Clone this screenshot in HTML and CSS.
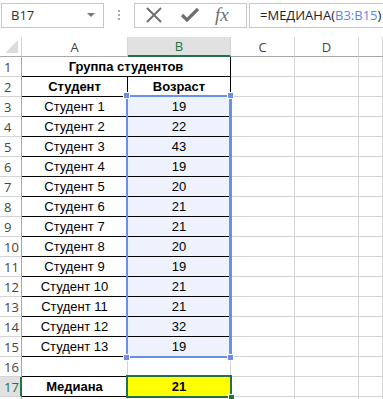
FILE: index.html
```html
<!DOCTYPE html>
<html>

<head>
    <title>Медиана</title>
    <link rel="stylesheet" href="styles.css">
</head>

<body>
    <div class="formula-bar">
        <div class="name-box">
            <span>B17</span>
            <span class="arrow"></span>
        </div>
        <div class="grip">
            <i></i><i></i><i></i>
        </div>
        <div class="buttons">
            <svg width="18" height="18" viewBox="0 0 18 18">
                <path d="M2 2 L16 16 M16 2 L2 16" stroke="#6f6f6f" stroke-width="2" fill="none" />
            </svg>
            <svg width="20" height="18" viewBox="0 0 20 18">
                <path d="M2 9 L7 14 L18 3" stroke="#6f6f6f" stroke-width="3.2" fill="none" />
            </svg>
            <span class="fx">fx</span>
        </div>
        <div class="formula">=МЕДИАНА(<span class="ref">B3:B15</span>)</div>
    </div>

    <div class="sheet">
        <!-- column headers -->
        <div class="corner"><span class="tri"></span></div>
        <div class="col-head">A</div>
        <div class="col-head active">B</div>
        <div class="col-head">C</div>
        <div class="col-head">D</div>
        <div class="col-head"></div>

        <!-- row 1 -->
        <div class="row-head">1</div>
        <div class="cell bold title">Группа студентов</div>
        <div class="cell"></div>
        <div class="cell"></div>
        <div class="cell"></div>

        <!-- row 2 -->
        <div class="row-head">2</div>
        <div class="cell bold boxed">Студент</div>
        <div class="cell bold boxed">Возраст</div>
        <div class="cell"></div>
        <div class="cell"></div>
        <div class="cell"></div>

        <div class="row-head">3</div>
        <div class="cell boxed">Студент 1</div>
        <div class="cell boxed sel">19</div>
        <div class="cell"></div><div class="cell"></div><div class="cell"></div>

        <div class="row-head">4</div>
        <div class="cell boxed">Студент 2</div>
        <div class="cell boxed sel">22</div>
        <div class="cell"></div><div class="cell"></div><div class="cell"></div>

        <div class="row-head">5</div>
        <div class="cell boxed">Студент 3</div>
        <div class="cell boxed sel">43</div>
        <div class="cell"></div><div class="cell"></div><div class="cell"></div>

        <div class="row-head">6</div>
        <div class="cell boxed">Студент 4</div>
        <div class="cell boxed sel">19</div>
        <div class="cell"></div><div class="cell"></div><div class="cell"></div>

        <div class="row-head">7</div>
        <div class="cell boxed">Студент 5</div>
        <div class="cell boxed sel">20</div>
        <div class="cell"></div><div class="cell"></div><div class="cell"></div>

        <div class="row-head">8</div>
        <div class="cell boxed">Студент 6</div>
        <div class="cell boxed sel">21</div>
        <div class="cell"></div><div class="cell"></div><div class="cell"></div>

        <div class="row-head">9</div>
        <div class="cell boxed">Студент 7</div>
        <div class="cell boxed sel">21</div>
        <div class="cell"></div><div class="cell"></div><div class="cell"></div>

        <div class="row-head">10</div>
        <div class="cell boxed">Студент 8</div>
        <div class="cell boxed sel">20</div>
        <div class="cell"></div><div class="cell"></div><div class="cell"></div>

        <div class="row-head">11</div>
        <div class="cell boxed">Студент 9</div>
        <div class="cell boxed sel">19</div>
        <div class="cell"></div><div class="cell"></div><div class="cell"></div>

        <div class="row-head">12</div>
        <div class="cell boxed">Студент 10</div>
        <div class="cell boxed sel">21</div>
        <div class="cell"></div><div class="cell"></div><div class="cell"></div>

        <div class="row-head">13</div>
        <div class="cell boxed">Студент 11</div>
        <div class="cell boxed sel">21</div>
        <div class="cell"></div><div class="cell"></div><div class="cell"></div>

        <div class="row-head">14</div>
        <div class="cell boxed">Студент 12</div>
        <div class="cell boxed sel">32</div>
        <div class="cell"></div><div class="cell"></div><div class="cell"></div>

        <div class="row-head">15</div>
        <div class="cell boxed">Студент 13</div>
        <div class="cell boxed sel">19</div>
        <div class="cell"></div><div class="cell"></div><div class="cell"></div>

        <div class="row-head">16</div>
        <div class="cell above-boxed"></div>
        <div class="cell above-boxed"></div>
        <div class="cell"></div><div class="cell"></div><div class="cell"></div>

        <div class="row-head active">17</div>
        <div class="cell bold boxed">Медиана</div>
        <div class="cell bold boxed yellow">21</div>
        <div class="cell"></div><div class="cell"></div><div class="cell"></div>

        <div class="row-head"></div>
        <div class="cell"></div><div class="cell"></div>
        <div class="cell"></div><div class="cell"></div><div class="cell"></div>

        <!-- overlays -->
        <div class="range">
            <span class="h tl"></span><span class="h tr"></span>
            <span class="h bl"></span><span class="h br"></span>
        </div>
        <div class="active-cell"><span class="fill-handle"></span></div>
    </div>
</body>

</html>
```

FILE: styles.css
```css
body {
    margin: 0;
    background-color: #fff;
    font-family: "Liberation Sans", Arial, sans-serif;
    width: 383px;
    height: 399px;
    overflow: hidden;
}

/* formula bar */

.formula-bar {
    display: flex;
    align-items: center;
    height: 28px;
    padding-top: 1px;
}

.name-box {
    display: flex;
    align-items: center;
    justify-content: space-between;
    box-sizing: border-box;
    width: 103px;
    height: 25px;
    margin-left: 1px;
    padding: 0 8px 0 9px;
    border: 1px solid #c6c6c6;
    font-family: "Open Sans", sans-serif;
    font-size: 13px;
    color: #333;
}

.arrow {
    width: 0;
    height: 0;
    border-left: 4px solid transparent;
    border-right: 4px solid transparent;
    border-top: 4px solid #777;
}

.grip {
    display: flex;
    flex-direction: column;
    gap: 2px;
    width: 30px;
    align-items: center;
}

.grip i {
    display: block;
    width: 2px;
    height: 2px;
    background-color: #aaa;
}

.buttons {
    display: flex;
    align-items: center;
    box-sizing: border-box;
    width: 113px;
    height: 25px;
    border: 1px solid #c6c6c6;
    padding-left: 10px;
    gap: 17px;
}

.fx {
    font-family: "Liberation Serif", serif;
    font-style: italic;
    font-size: 19px;
    color: #6f6f6f;
    margin-left: -2px;
}

.formula {
    box-sizing: border-box;
    height: 25px;
    margin-left: 2px;
    flex: 1;
    border: 1px solid #c6c6c6;
    border-right: none;
    padding: 2px 0 0 10px;
    font-family: "Open Sans", sans-serif;
    font-size: 13px;
    color: #222;
    white-space: nowrap;
}

.ref {
    color: #5b86e6;
}

/* sheet */

.sheet {
    position: relative;
    display: grid;
    grid-template-columns: 22px 106px 103px 64px 64px 1fr;
    grid-template-rows: 20px repeat(18, 20px);
    margin-top: 8px;
    font-size: 13px;
}

.corner {
    position: relative;
    border-right: 1px solid #d4d4d4;
    border-bottom: 1px solid #a8a8a8;
}

.tri {
    position: absolute;
    right: 3px;
    bottom: 3px;
    width: 0;
    height: 0;
    border-left: 13px solid transparent;
    border-bottom: 13px solid #dcdcdc;
}

.col-head,
.row-head {
    display: flex;
    align-items: center;
    justify-content: center;
    box-sizing: border-box;
    font-family: "Open Sans", sans-serif;
    font-size: 13px;
    color: #444;
    background-color: #fff;
}

.col-head {
    border-right: 1px solid #d4d4d4;
    border-bottom: 1px solid #a8a8a8;
}

.row-head {
    border-right: 1px solid #a8a8a8;
    border-bottom: 1px solid #d4d4d4;
    justify-content: flex-start;
    padding-left: 4px;
}

.col-head.active {
    background-color: #e1e1e1;
    color: #217346;
    border-bottom: 2px solid #217346;
}

.row-head.active {
    background-color: #e1e1e1;
    color: #217346;
    border-right: 2px solid #217346;
}

.cell {
    display: flex;
    align-items: center;
    justify-content: center;
    box-sizing: border-box;
    border-right: 1px solid #d4d4d4;
    border-bottom: 1px solid #d4d4d4;
    color: #000;
}

.bold {
    font-weight: bold;
}

.title {
    grid-column: 2 / 4;
    border-right: 1px solid #000;
    border-bottom: 1px solid #000;
}

.boxed {
    border-right: 1px solid #000;
    border-bottom: 1px solid #000;
}

.above-boxed {
    border-bottom: 1px solid #000;
}

.sel {
    background-color: #edf2fc;
}

.yellow {
    background-color: #ffff00;
}

/* selection overlays */

.range {
    position: absolute;
    grid-column: 3 / 4;
    grid-row: 4 / 17;
    top: -2px;
    left: -2px;
    right: -1px;
    bottom: -1px;
    border: 2px solid #6a8fe6;
    border-right-width: 3px;
}

.h {
    position: absolute;
    width: 5px;
    height: 5px;
    background-color: #6a8fe6;
    border: 1px solid #fff;
}

.tl { top: -5px; left: -5px; }
.tr { top: -5px; right: -5px; }
.bl { bottom: -5px; left: -5px; }
.br { bottom: -5px; right: -5px; }

.active-cell {
    position: absolute;
    grid-column: 3 / 4;
    grid-row: 18 / 19;
    top: -2px;
    left: -2px;
    right: -1px;
    bottom: -1px;
    border: 2px solid #217346;
}

.fill-handle {
    position: absolute;
    right: -5px;
    bottom: -5px;
    width: 5px;
    height: 5px;
    background-color: #217346;
    border: 1px solid #fff;
}
```
